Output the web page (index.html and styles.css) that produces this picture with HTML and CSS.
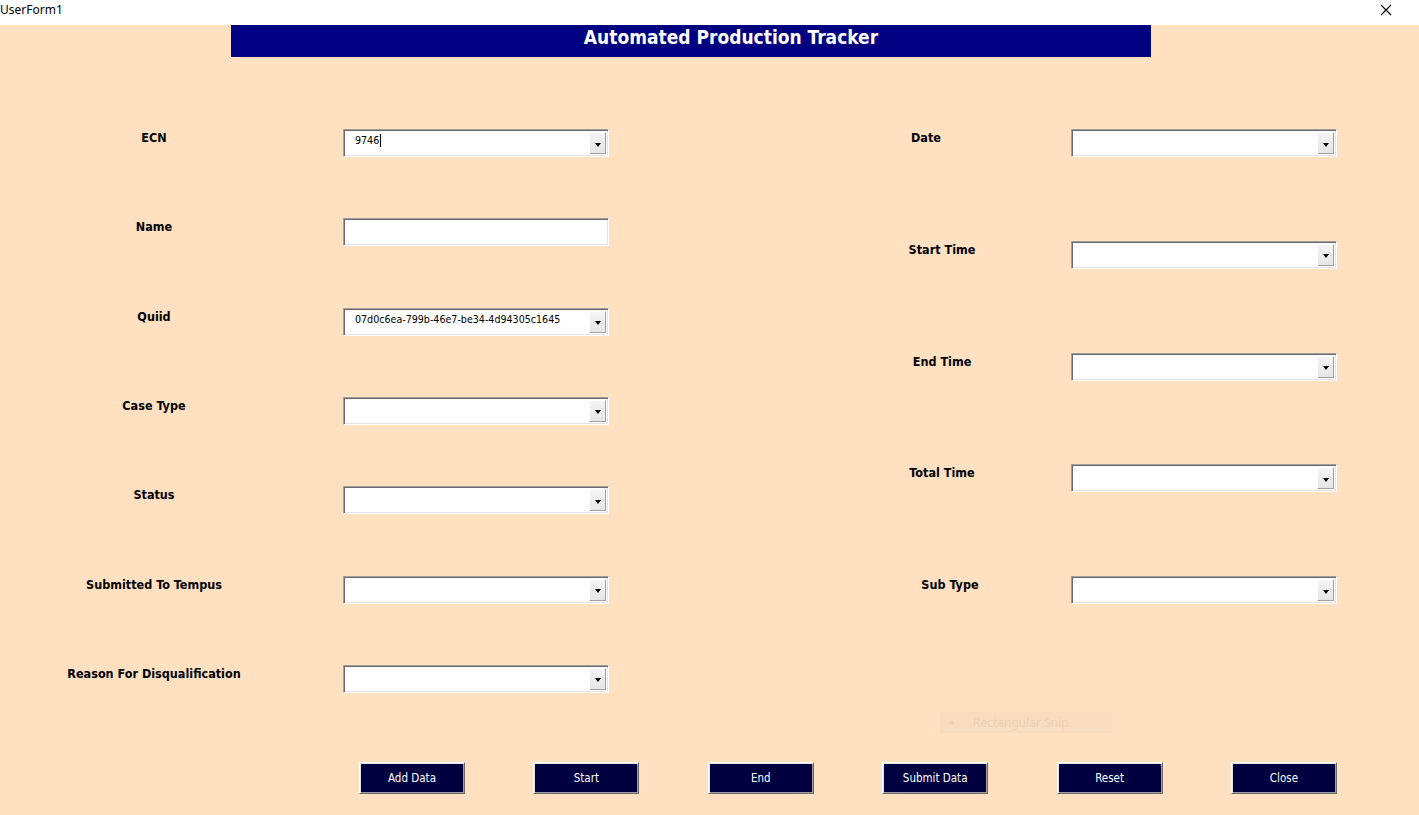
FILE: index.html
```html
<!DOCTYPE html>
<html>
<head>
<meta charset="utf-8">
<title>UserForm1</title>
<link rel="stylesheet" href="styles.css">
</head>
<body>
<div class="window">
  <div class="titlebar">
    <span class="title">UserForm1</span>
    <svg class="close" width="12" height="12" viewBox="0 0 12 12"><path d="M1 1L11 11M11 1L1 11" stroke="#000" stroke-width="1.1" fill="none"/></svg>
  </div>
  <div class="form">
    <div class="header">Automated Production Tracker</div>
    <div class="fields">
      <div class="col col-left">
        <div class="label">ECN</div>
        <div class="combo"><span class="value">9746<span class="caret"></span></span><span class="drop"><span class="tri"></span></span></div>
        <div class="label">Name</div>
        <div class="combo"></div>
        <div class="label">Quiid</div>
        <div class="combo"><span class="value">07d0c6ea-799b-46e7-be34-4d94305c1645</span><span class="drop"><span class="tri"></span></span></div>
        <div class="label">Case Type</div>
        <div class="combo"><span class="value"></span><span class="drop"><span class="tri"></span></span></div>
        <div class="label">Status</div>
        <div class="combo"><span class="value"></span><span class="drop"><span class="tri"></span></span></div>
        <div class="label">Submitted To Tempus</div>
        <div class="combo"><span class="value"></span><span class="drop"><span class="tri"></span></span></div>
        <div class="label">Reason For Disqualification</div>
        <div class="combo"><span class="value"></span><span class="drop"><span class="tri"></span></span></div>
      </div>
      <div class="col col-right">
        <div class="label shift-date">Date</div>
        <div class="combo"><span class="value"></span><span class="drop"><span class="tri"></span></span></div>
        <div class="label">Start Time</div>
        <div class="combo"><span class="value"></span><span class="drop"><span class="tri"></span></span></div>
        <div class="label">End Time</div>
        <div class="combo"><span class="value"></span><span class="drop"><span class="tri"></span></span></div>
        <div class="label">Total Time</div>
        <div class="combo"><span class="value"></span><span class="drop"><span class="tri"></span></span></div>
        <div class="label shift-sub">Sub Type</div>
        <div class="combo"><span class="value"></span><span class="drop"><span class="tri"></span></span></div>
      </div>
    </div>
    <div class="snip-row">
      <div class="snip"><span class="snip-dot"></span><span class="snip-text">Rectangular Snip</span></div>
    </div>
    <div class="buttons">
      <button class="btn">Add Data</button>
      <button class="btn">Start</button>
      <button class="btn">End</button>
      <button class="btn">Submit Data</button>
      <button class="btn">Reset</button>
      <button class="btn">Close</button>
    </div>
  </div>
</div>
</body>
</html>
```

FILE: styles.css
```css
* { box-sizing: border-box; }
html, body { margin: 0; padding: 0; }
body { width: 1419px; height: 815px; overflow: hidden; background: #FFE0C0; }
.window { width: 1419px; height: 815px; display: flex; flex-direction: column; }
.titlebar {
  height: 25px; background: #fff; display: flex; align-items: center; justify-content: space-between;
  padding: 0 27px 0 0;
  font-family: "Noto Sans", "Liberation Sans", sans-serif; font-size: 12px; color: #000;
}
.title { position: relative; top: -3px; }
.close { position: relative; top: -3px; }
.form { flex: 1; background: #FFE0C0; display: flex; flex-direction: column; }
.header {
  margin-left: 231px; width: 920px; height: 32px; background: #000080; color: #fff;
  font-family: "DejaVu Sans Condensed", "DejaVu Sans", sans-serif; font-weight: bold; font-size: 19px;
  display: flex; align-items: center; justify-content: center; padding: 0 0 9px 80px;
}
.fields { display: flex; padding-top: 72px; }
.col { display: grid; grid-auto-rows: 28px; align-items: start; }
.col-left { grid-template-columns: 308px 266px; column-gap: 35px; row-gap: 61.33px; }
.col-right { margin-left: 253px; grid-template-columns: 160px 266px; column-gap: 49px; row-gap: 83.75px; }
.label {
  text-align: center; font-family: "DejaVu Sans Condensed", "DejaVu Sans", sans-serif; font-weight: bold;
  font-size: 12.5px; line-height: 16px; padding-top: 1px; color: #000; white-space: nowrap;
}
.shift-date { padding-right: 32px; }
.shift-sub { padding-left: 16px; }
.combo {
  height: 28px; background: #fff; display: flex; align-items: stretch;
  border-top: 1px solid #a0a0a0; border-left: 1px solid #a0a0a0;
  border-bottom: 1px solid #fff; border-right: 1px solid #fff;
  box-shadow: inset 1px 1px 0 #696969, inset -1px -1px 0 #e3e3e3;
}
.value {
  flex: 1; display: flex; align-items: center; padding: 0 0 6px 11px;
  font-family: "DejaVu Sans Condensed", "DejaVu Sans", sans-serif; font-size: 10.6px; color: #000;
}
.caret { display: inline-block; width: 1px; height: 13px; background: #000; margin-left: 1px; }
.drop {
  width: 17px; margin: 2px 2px 2px 0; background: linear-gradient(#f4f4f4, #e6e6e6);
  border-left: 1px solid #fff; border-top: 1px solid #fff; border-right: 1px solid #a0a0a0; border-bottom: 1px solid #a0a0a0;
  display: flex; align-items: center; justify-content: center;
}
.tri { width: 0; height: 0; border-left: 3.5px solid transparent; border-right: 3.5px solid transparent; border-top: 4px solid #000; margin-top: 3px; }
.snip-row { margin-top: 19px; padding-left: 940px; height: 21px; }
.snip {
  width: 172px; height: 21px; background: #F8DCC0; display: flex; align-items: center;
  font-family: "Noto Sans", "Liberation Sans", sans-serif; font-size: 12px; color: #F0D0B2;
}
.snip-dot { width: 5px; height: 5px; border-radius: 50%; background: #F0D2B4; margin: 0 19px 0 9px; }
.buttons { margin-top: 29px; padding-left: 359px; display: flex; gap: 68.4px; }
.btn {
  width: 106px; height: 32px; background: #000040; color: #fff; padding: 0 0 0 0;
  font-family: "DejaVu Sans Condensed", "DejaVu Sans", sans-serif; font-size: 11.5px;
  border-top: 1px solid #fff; border-left: 1px solid #fff; border-bottom: 1px solid #696969; border-right: 1px solid #696969;
  box-shadow: inset 1px 1px 0 #e3e3e3, inset -1px -1px 0 #a0a0a0;
}
```
